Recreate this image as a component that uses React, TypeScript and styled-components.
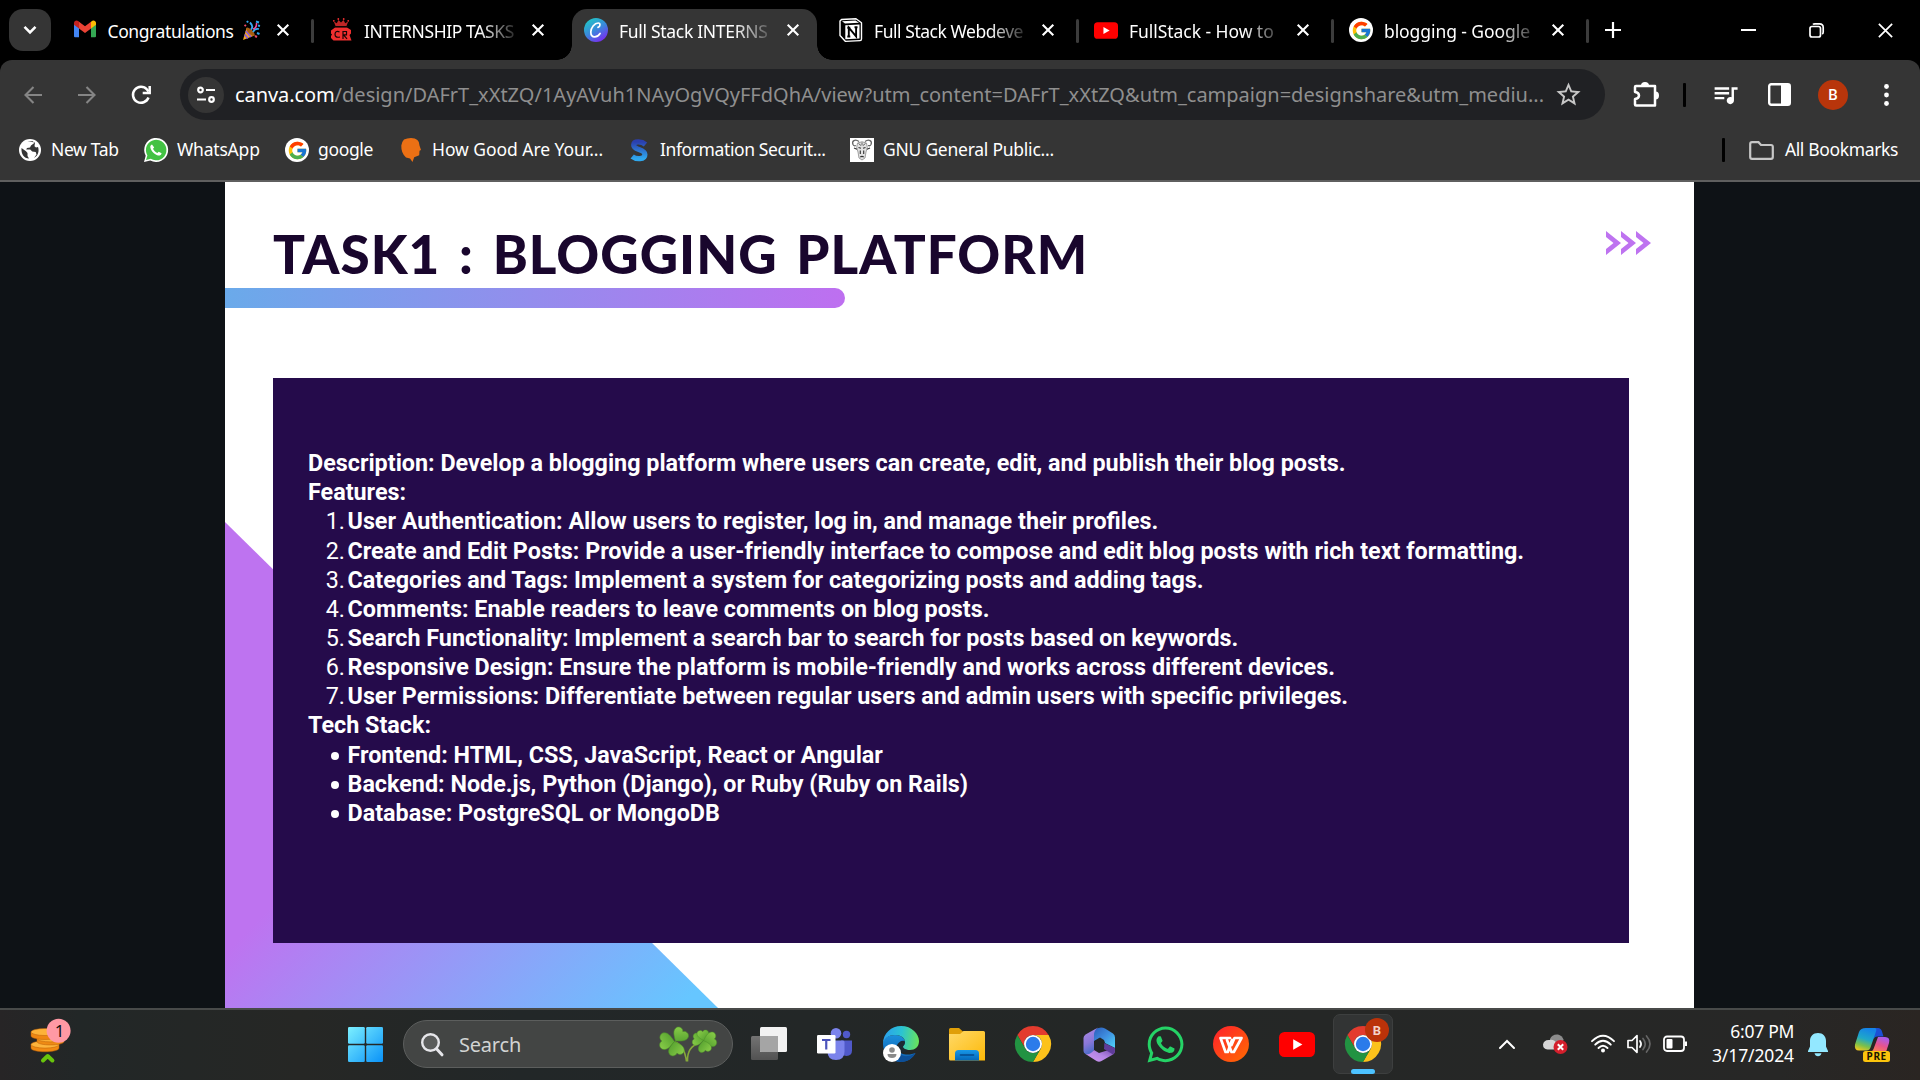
import React from "react";
import styled, { createGlobalStyle, css } from "styled-components";
import { FcGoogle } from "react-icons/fc";
import { FaWhatsapp } from "react-icons/fa";
import { MdQueueMusic, MdStarBorder } from "react-icons/md";

const GlobalStyle = createGlobalStyle`
  * { box-sizing: border-box; }
  html, body { margin: 0; padding: 0; background: #000; overflow: hidden; }
`;

const ui = `"Noto Sans", "Open Sans", sans-serif`;

/* ---------- shell ---------- */

const Desktop = styled.div`
  width: 1920px;
  height: 1080px;
  display: flex;
  flex-direction: column;
  overflow: hidden;
  background: #000;
  font-family: ${ui};
  color: #fff;
`;

const Label = styled.span<{ $size?: number; $track?: number; $color?: string; $top?: number; $bottom?: number }>`
  display: block;
  padding-top: ${(p) => p.$top ?? 0}px;
  padding-bottom: ${(p) => p.$bottom ?? 0}px;
  font-size: ${(p) => p.$size ?? 17.5}px;
  letter-spacing: ${(p) => p.$track ?? 0}px;
  color: ${(p) => p.$color ?? "#fff"};
  white-space: nowrap;
  line-height: 1.3;
`;

const Svg = styled.svg`
  display: block;
  flex: none;
  overflow: visible;
`;

const Slot = styled.div<{ $w: number; $ml?: number }>`
  flex: none;
  width: ${(p) => p.$w}px;
  margin-left: ${(p) => p.$ml ?? 0}px;
  display: flex;
  align-items: center;
  justify-content: center;

  > svg {
    flex: none;
  }
`;

/* ---------- tab strip ---------- */

const TabStrip = styled.div`
  flex: none;
  height: 60px;
  padding: 9px 0 0 9px;
  display: flex;
  background: #000;
`;

const TabSearch = styled.div`
  width: 42px;
  height: 42px;
  margin-right: 11px;
  border-radius: 14px;
  background: #353535;
  display: grid;
  place-items: center;
`;

const TabCell = styled.div`
  width: 255px;
  display: flex;
`;

const TabBody = styled.div<{ $active?: boolean; $inset: number }>`
  position: relative;
  width: 245px;
  height: 51px;
  padding: 0 12px 9px ${(p) => p.$inset}px;
  display: flex;
  align-items: center;
  ${(p) =>
    p.$active &&
    css`
      background: #353535;
      border-radius: 15px 15px 0 0;
      &::before,
      &::after {
        content: "";
        position: absolute;
        bottom: 0;
        width: 15px;
        height: 15px;
      }
      &::before {
        left: -15px;
        background: radial-gradient(circle at 0 0, transparent 14.5px, #353535 15px);
      }
      &::after {
        right: -15px;
        background: radial-gradient(circle at 100% 0, transparent 14.5px, #353535 15px);
      }
    `}
`;

const TabTitle = styled.div<{ $fade: boolean }>`
  width: 152px;
  margin-left: 11px;
  display: flex;
  align-items: center;
  ${(p) =>
    p.$fade &&
    css`
      mask-image: linear-gradient(90deg, #000 115px, rgba(0, 0, 0, 0.15) 151px);
    `}
`;

const TabClose = styled.div`
  width: 24px;
  margin-left: auto;
  display: grid;
  place-items: center;
`;

const TabDivider = styled.div<{ $show: boolean }>`
  width: 3px;
  height: 24px;
  margin: 10px 0 0 4px;
  border-radius: 2px;
  background: ${(p) => (p.$show ? "#3c3c3c" : "transparent")};
`;

const WindowControls = styled.div`
  margin-left: auto;
  height: 42px;
  display: flex;
  align-items: center;
`;

/* ---------- toolbar ---------- */

const Chrome = styled.div`
  flex: none;
  height: 122px;
  background: #353535;
  border-radius: 12px 12px 0 0;
  border-bottom: 2px solid #5f5f5f;
`;

const Toolbar = styled.div`
  height: 69px;
  display: flex;
  align-items: center;
`;

const AddressBar = styled.div`
  width: 1425px;
  height: 51px;
  margin-left: 27px;
  padding: 0 22px 0 8px;
  border-radius: 26px;
  background: #202124;
  display: flex;
  align-items: center;
`;

const SiteInfo = styled.div`
  width: 36px;
  height: 36px;
  border-radius: 50%;
  background: #353535;
  display: grid;
  place-items: center;
  margin-right: 11px;
`;

const Url = styled.div`
  flex: 1;
  display: flex;
  align-items: center;
`;

const Divider = styled.div<{ $ml: number }>`
  width: 3px;
  height: 24px;
  margin-left: ${(p) => p.$ml}px;
  border-radius: 1px;
  background: #000;
`;

const Avatar = styled.div`
  width: 30px;
  height: 30px;
  margin-left: 27px;
  border-radius: 50%;
  background: #b8350b;
  display: grid;
  place-items: center;
  font: 500 15px Roboto, sans-serif;
`;

const Bookmarks = styled.div`
  height: 51px;
  padding: 0 22px 9px 18px;
  display: flex;
  align-items: center;
`;

const Bookmark = styled.div<{ $w: number }>`
  width: ${(p) => p.$w}px;
  display: flex;
  align-items: center;
  gap: 9px;
`;

const AllBookmarks = styled.div`
  margin-left: auto;
  display: flex;
  align-items: center;
`;

/* ---------- slide ---------- */

const Viewport = styled.main`
  flex: none;
  height: 826px;
  background: #0e1216;
  padding: 0 226px 0 225px;
`;

const Slide = styled.section`
  position: relative;
  height: 826px;
  background: #fff;
  overflow: hidden;
`;

const CornerWedge = styled.div`
  position: absolute;
  left: 0;
  bottom: 0;
  width: 493px;
  height: 486px;
  clip-path: polygon(0 0, 100% 100%, 0 100%);
  background: linear-gradient(135deg, #be73f0 0%, #be73f0 44%, #66c6ff 96%);
`;

const SlideHeader = styled.header`
  height: 106px;
  padding: 0 43px 0 48px;
  display: flex;
  justify-content: space-between;
`;

const SlideTitle = styled.h1`
  margin: 0;
  padding-top: 38px;
  font: 900 53px/68px Lato, sans-serif;
  letter-spacing: 1px;
  word-spacing: 5.2px;
  color: #19062d;
  white-space: nowrap;
`;

const Arrows = styled.div`
  padding-top: 49px;
`;

const Underline = styled.div`
  width: 620px;
  height: 20px;
  border-radius: 0 10px 10px 0;
  background: linear-gradient(90deg, #6aaaea, #be6ff0);
`;

const Card = styled.article`
  position: relative;
  width: 1356px;
  height: 565px;
  margin: 70px 0 0 48px;
  padding: 71.2px 0 0 35px;
  background: #250b4b;
  font: 700 23.33px/29.14px Roboto, sans-serif;
  color: #fff;
`;

const Line = styled.div`
  white-space: nowrap;
`;

const Item = styled.div`
  display: grid;
  grid-template-columns: 39.5px 1fr;
  white-space: nowrap;
`;

const Marker = styled.span`
  padding-right: 2.5px;
  text-align: right;
  font-weight: 400;
`;

const Dot = styled.i`
  justify-self: end;
  align-self: center;
  width: 8px;
  height: 8px;
  margin: 1px 8.5px 0 0;
  border-radius: 50%;
  background: #fff;
`;

/* ---------- taskbar ---------- */

const Taskbar = styled.footer`
  flex: none;
  height: 72px;
  padding-bottom: 2px;
  border-top: 2px solid #484a49;
  background: linear-gradient(90deg, #272526 0, #222727 80px, #262725 300px, #222728 520px, #242726 1100px, #272726 1780px, #2a2522 1920px);
  display: flex;
  align-items: center;
`;

const SearchBox = styled.div`
  width: 330px;
  height: 48px;
  margin-left: 20px;
  padding: 0 13px 0 16.5px;
  border: 1.5px solid #5c5e5d;
  border-radius: 24px;
  background: #434544;
  display: flex;
  align-items: center;
`;

const Apps = styled.div`
  margin-left: 6px;
  display: flex;
  gap: 6px;
`;

const AppButton = styled.div<{ $active?: boolean }>`
  position: relative;
  width: 60px;
  height: 60px;
  border-radius: 7px;
  display: grid;
  place-items: center;
  ${(p) =>
    p.$active &&
    css`
      background: #323434;
      border: 1.5px solid #3d3f3f;
      &::after {
        content: "";
        position: absolute;
        left: 16.5px;
        bottom: -1px;
        width: 24px;
        height: 5px;
        border-radius: 3px;
        background: #4cc2ff;
      }
    `}
`;

const ProfileBadge = styled.span`
  position: absolute;
  top: 3px;
  right: 3px;
  width: 24px;
  height: 24px;
  border-radius: 50%;
  background: #bb3209;
  color: #f3d3c9;
  display: grid;
  place-items: center;
  font: 700 13px Roboto, sans-serif;
`;

const Clock = styled.div`
  width: 106px;
  padding-bottom: 2px;
  display: flex;
  flex-direction: column;
  align-items: flex-end;
  gap: 1px;
`;

/* ---------- drawings ---------- */

const Cross = ({ s, w = 2 }: { s: number; w?: number }) => (
  <Svg width={s} height={s} viewBox="0 0 12 12" fill="none" stroke="#fff" strokeWidth={w}>
    <path d="M.7.7l10.6 10.6M11.3.7L.7 11.3" />
  </Svg>
);

const Gmail = () => (
  <Svg width="24" height="24" viewBox="0 0 24 24">
    <path d="M1 5v13.200q0 1 1 1h4V8.500z" fill="#4285f4" />
    <path d="M23 5v13.200q0 1-1 1h-4V8.500z" fill="#34a853" />
    <path d="M18 4v6.500l5-3.700V5c0-2.500-2.700-3.200-4.200-2z" fill="#fbbc04" />
    <path d="M6 10.500V3.800l6 4.500 6-4.500v6.700L12 15z" fill="#ea4335" />
    <path d="M1 5v1.800l5 3.700V3.800L5.200 3C3.500 1.800 1 2.600 1 5z" fill="#c5221f" />
  </Svg>
);

const Popper = () => (
  <Svg width="19" height="21" viewBox="0 0 19 21">
    <path d="M4.500 8L1 20l11.500-4.500z" fill="#f7a823" />
    <path d="M4 11l5 6M2.800 14.500l3 4" stroke="#8b5bd6" strokeWidth="1.800" />
    <ellipse cx="8.500" cy="11.800" rx="5.600" ry="2.200" transform="rotate(45 8.500 11.800)" fill="#a65c12" />
    <path d="M9 9.500q3-3-1-7M11 12q2-4 6-3" stroke="#38a8f5" strokeWidth="1.800" fill="none" />
    <path d="M11 9q4-1 3.500-6" stroke="#f04aa0" strokeWidth="1.500" fill="none" />
    <path d="M14 1.500l3 1M5 1l1 1.500M16 5.500l2 .5M15 13l2.500 1" stroke="#2fa4f0" strokeWidth="2" />
    <path d="M2.500 5l1.500 1M13 16l2 1" stroke="#f04a6a" strokeWidth="2" />
  </Svg>
);

const RobotCrown = () => (
  <Svg width="24" height="24" viewBox="0 0 24 24">
    <g fill="#ef2f2f">
      <path d="M6.500 8L4.800 3.500l3 1.800L9.500 2 12 4.500 14.500 2l1.700 3.300 3-1.800L17.500 8z" opacity=".8" />
      <circle cx="4.800" cy="2.800" r=".9" />
      <circle cx="9.300" cy="1" r=".9" />
      <circle cx="14.700" cy="1" r=".9" />
      <circle cx="19.200" cy="2.800" r=".9" />
      <path d="M6 9.500h12l4 2.500v3.500l-1.500 1.500 2 5.500H4.500L2 20v-2l1-1.500-1-1v-3z" />
    </g>
    <path d="M10.500 13.800Q6 12.500 6 16.300t5 2.700M14 21v-7.500h3.500v3.300h-3l3.500 4" fill="none" stroke="#160606" strokeWidth="1.200" />
    <path d="M5 8.700h14" stroke="#160606" strokeWidth=".8" />
  </Svg>
);

const Canva = () => (
  <Svg width="24" height="24" viewBox="0 0 24 24">
    <defs>
      <linearGradient id="cv" x1="0.150" y1="0.100" x2="0.700" y2="1">
        <stop offset="0" stopColor="#22c3c8" />
        <stop offset=".5" stopColor="#3b86dc" />
        <stop offset="1" stopColor="#7a2bf0" />
      </linearGradient>
    </defs>
    <circle cx="12" cy="12" r="12" fill="url(#cv)" />
    <path d="M14 9.300c2.500-.6 2.600-4.300.2-4.300C10.500 5 6.800 9.800 6.800 14c0 3 1.500 4.900 3.900 4.900 2.300 0 4-1.500 5.400-3.500" fill="none" stroke="#fff" strokeWidth="1.700" strokeLinecap="round" />
  </Svg>
);

const Notion = () => (
  <Svg width="24" height="24" viewBox="0 0 24 24">
    <path d="M2.500 1.500L17 .8l5.500 4V21q0 1.500-1.500 1.600L6.500 23.400 1 17.500V3z" fill="#000" stroke="#fff" strokeWidth="1.400" strokeLinejoin="round" />
    <path d="M3 3.200l13.500-.7 3.500 2.300-14 .8z" fill="#fff" />
    <path d="M6.300 7.300l14.200-.8v14L6.300 21.300z" fill="#fff" />
    <path d="M9.800 18.500V9.700l7.300 8.600V9.200M8.300 9.700h3M15.500 9.200h3M8.300 18.500h3" fill="none" stroke="#000" strokeWidth="1.900" />
  </Svg>
);

const YouTube = ({ w, h }: { w: number; h: number }) => (
  <Svg width={w} height={h} viewBox="0 0 36 25">
    <rect width="36" height="25" rx="5.500" fill="#f00" />
    <path d="M14.200 7.200l9.200 5.300-9.200 5.300z" fill="#fff" />
  </Svg>
);

const GoogleBadge = styled.div`
  width: 24px;
  height: 24px;
  border-radius: 50%;
  background: #fff;
  display: grid;
  place-items: center;
`;

const GoogleIcon = () => (
  <GoogleBadge>
    <FcGoogle size={21} />
  </GoogleBadge>
);

const Globe = () => (
  <Svg width="22" height="22" viewBox="0 0 22 22">
    <circle cx="11" cy="11" r="11" fill="#fff" />
    <path d="M2.500 9l4.500 3.200 1.500 1.800v3l1.500 2.500C5 19.500 2 15 2.500 9zM8.500 2.300l5.500-.1 1 2-3 2.300-1 2-3 .5-.8 1.500h4l2 2 3.500.5.8 2.500-2.500 3.500c4-2 5.500-7 4-11l-2 .5-1.500-1.300L16 3.500" fill="#353535" />
  </Svg>
);

const WhatsAppMark = () => (
  <Svg width="24" height="24" viewBox="0 0 24 24">
    <path d="M0 24l1.700-6.200A12 12 0 1 1 6.300 22.400z" fill="#fff" />
    <path d="M2 22l1.400-4.600A10.300 10.300 0 1 1 6.800 20.800z" fill="#43c244" />
    <path d="M8 6.500c-1.300.3-2 1.700-1.600 3.200.8 3.300 4 6.800 7.600 7.700 1.600.4 3.300-.5 3.600-2.200l-2.900-1.500-1.300 1.400c-2-.8-3.600-2.400-4.400-4.300l1.200-1.400z" fill="#fff" />
  </Svg>
);

const Head = () => (
  <Svg width="20" height="24" viewBox="0 0 20 24">
    <path d="M3 1.500Q6 0 10 0q8.500 0 8.500 7.500L20 12l-1.500.8-.3 4.500-5 2L11.500 24 9 20.500 5 19.500Q0 15 .3 7.500 1 3.500 3 1.500z" fill="#ec7014" />
  </Svg>
);

const SMark = () => (
  <Svg width="18" height="23" viewBox="0 0 18 23">
    <defs>
      <linearGradient id="sm" x1="0" y1="0" x2="0" y2="1">
        <stop offset="0" stopColor="#2b3fae" />
        <stop offset="1" stopColor="#2fa8ee" />
      </linearGradient>
    </defs>
    <path d="M15.500 5.500C12 2.500 4 1.500 3.700 6c-.2 5.500 11.200 3.500 11.200 9.500 0 5.500-9 5-12.700 2" fill="none" stroke="url(#sm)" strokeWidth="5.200" />
  </Svg>
);

const Gnu = () => (
  <Svg width="24" height="24" viewBox="0 0 24 24">
    <rect width="24" height="24" fill="#fff" />
    <path d="M9 3.500C5 .5 1.500 3 3 6.500 4 8.500 6 7.500 6 7.500M15 3.500c4-3 7.500-.5 6 3-1 2-3 1-3 1" fill="none" stroke="#666" strokeWidth="1.300" />
    <path d="M7.500 5q4.500-2.500 9 0l.8 4.500-1.300 4.500-1 6-3 2-3-2-1-6L6.700 9.500z" fill="#e2e2e2" stroke="#8a8a8a" strokeWidth=".8" />
    <path d="M4 10l3 1.200M20 10l-3 1.200M8.500 9.500l2.500.8M15.500 9.500l-2.500.8M10.300 12.500v3.500M13.700 12.500v3.500M10.300 19q1.700-1.200 3.400 0" stroke="#333" strokeWidth="1.100" fill="none" />
    <path d="M8.500 5.500l2.500 2M15.500 5.500l-2.500 2M12 4.500v3" stroke="#555" strokeWidth=".9" />
  </Svg>
);

const ChromeLogo = () => (
  <Svg width="36" height="36" viewBox="0 0 48 48">
    <path d="M3.200 12A24 24 0 0 1 44.800 12H24A12 12 0 0 0 13.600 30z" fill="#e33b2e" />
    <path d="M44.800 12A24 24 0 0 1 24 48L34.400 30A12 12 0 0 0 24 12z" fill="#fcc21b" />
    <path d="M24 48A24 24 0 0 1 3.200 12L13.600 30A12 12 0 0 0 34.400 30z" fill="#229342" />
    <circle cx="24" cy="24" r="12" fill="#fff" />
    <circle cx="24" cy="24" r="9.600" fill="#2b7bea" />
  </Svg>
);

const Coins = () => (
  <Svg width="46" height="55" viewBox="0 0 46 55">
    <g stroke="#b85f08" strokeWidth=".5">
      <path d="M3 27.500v3.500c0 5 28 5 28 0v-3.500z" fill="#f08a12" />
      <ellipse cx="17" cy="27.500" rx="14" ry="3.600" fill="#fdb43c" />
      <path d="M9 21.500v3c0 4.600 27 4.600 27 0v-3z" fill="#ee8a14" />
      <ellipse cx="22.500" cy="21.500" rx="13.500" ry="3.400" fill="#fcae34" />
      <path d="M3 15v4c0 4.600 28 4.600 28 0v-4z" fill="#ee8612" />
      <ellipse cx="17" cy="15" rx="14" ry="3.500" fill="#fdb238" />
    </g>
    <path d="M15 43.500l4.700-4.500 4.700 4.500" fill="none" stroke="#68c40c" strokeWidth="4" strokeLinecap="round" strokeLinejoin="round" />
    <circle cx="30.600" cy="13.800" r="12" fill="#ff99a4" />
    <text x="31.500" y="19.800" textAnchor="middle" fontFamily={ui} fontSize="17" fill="#111">1</text>
  </Svg>
);

const StartLogo = () => (
  <Svg width="35" height="35" viewBox="0 0 35 35">
    <defs>
      <linearGradient id="st" gradientUnits="userSpaceOnUse" x1="0" y1="0" x2="35" y2="35">
        <stop offset="0" stopColor="#7cf0ff" />
        <stop offset="1" stopColor="#0a92f8" />
      </linearGradient>
    </defs>
    <g fill="url(#st)">
      <rect width="16.800" height="16.800" rx="1.200" />
      <rect x="18.200" width="16.800" height="16.800" rx="1.200" />
      <rect y="18.200" width="16.800" height="16.800" rx="1.200" />
      <rect x="18.200" y="18.200" width="16.800" height="16.800" rx="1.200" />
    </g>
  </Svg>
);

const Leaf = ({ t }: { t: string }) => (
  <path transform={t} d="M0 0C-4-3-8.500-6-7-10.500-5.500-13.500-1.500-13.500 0-11 1.500-13.500 5.500-13.500 7-10.500 8.500-6 4-3 0 0z" fill="url(#lf)" stroke="#4c8f28" strokeWidth=".5" />
);

const Shamrocks = () => (
  <Svg width="60" height="36" viewBox="0 0 60 36">
    <defs>
      <linearGradient id="lf" x1="0" y1="0" x2="1" y2="1">
        <stop offset="0" stopColor="#8ccf4a" />
        <stop offset="1" stopColor="#4d9a2b" />
      </linearGradient>
    </defs>
    <path d="M17 16c6 2 10 8 11.500 19.500M42 17c-8 2-13 7-12.500 18.500" fill="none" stroke="#86a93a" strokeWidth="1.600" />
    <Leaf t="translate(16.500 15.500) rotate(-88) scale(1.150)" />
    <Leaf t="translate(17.500 15) rotate(38) scale(1.080)" />
    <Leaf t="translate(16.500 15.500) rotate(168) scale(1.080)" />
    <Leaf t="translate(45.500 14.500) rotate(-80) scale(.85)" />
    <Leaf t="translate(45.500 14.500) rotate(-5) scale(.8)" />
    <Leaf t="translate(45.500 14.500) rotate(82) scale(1)" />
    <Leaf t="translate(45.500 14.500) rotate(170) scale(.9)" />
  </Svg>
);

const TaskView = () => (
  <Svg width="36" height="36" viewBox="0 0 36 36">
    <defs>
      <linearGradient id="tv" x1="0" y1="0" x2="0" y2="1">
        <stop offset="0" stopColor="#737373" />
        <stop offset="1" stopColor="#525252" />
      </linearGradient>
    </defs>
    <rect y="10" width="27" height="24" rx="1.500" fill="url(#tv)" />
    <rect x="9" y="1" width="27" height="25" rx="1.500" fill="#f2f2f2" />
    <path d="M9 10h18v16H10.500Q9 26 9 24.500z" fill="#a5a5a5" />
  </Svg>
);

const Teams = () => (
  <Svg width="36" height="36" viewBox="0 0 36 36">
    <circle cx="29.500" cy="8.500" r="3.700" fill="#5059c9" />
    <path d="M24 14.500h11v10q0 5-5.500 5.500l-5-1z" fill="#5059c9" />
    <circle cx="19" cy="7.300" r="5.300" fill="#7b83eb" />
    <path d="M10.500 14.500H26q1.500 0 1.500 1.500v9.500q0 8.500-8.500 8.500t-8.500-8.500z" fill="#7b83eb" />
    <rect x="0" y="9" width="18.500" height="18.500" rx="1.200" fill="#fff" />
    <path d="M5 14h8.500M9.250 14v9.500" stroke="#4b53bc" strokeWidth="2.200" />
  </Svg>
);

const Edge = () => (
  <Svg width="36" height="36" viewBox="0 0 36 36">
    <defs>
      <linearGradient id="eg" x1="0" y1="0.400" x2="1" y2="0.500">
        <stop offset="0" stopColor="#2a9fee" />
        <stop offset=".5" stopColor="#2bc3d2" />
        <stop offset="1" stopColor="#68e45c" />
      </linearGradient>
      <linearGradient id="eb" x1="0" y1="0" x2="0" y2="1">
        <stop offset="0" stopColor="#1b8fdc" />
        <stop offset="1" stopColor="#0d5bab" />
      </linearGradient>
    </defs>
    <path d="M0 18C0 12 6 9 12 9c7 0 10 4 10 7 0 1.500-1 2-2 3-5 1-6 9 3 9.500 4 .5 7-1 9.500-1.500C30 32 24.500 36 18 36 8 36 0 28 0 18z" fill="url(#eb)" />
    <path d="M14 20c0 7 5 11 11 10 3 0 5-1.500 7.500-3C30 32 24 36 18 36c-5-3-8-10-4-16z" fill="#0d4f98" />
    <path d="M0 18C0 7 8.500 0 18 0c11 0 18 8 18 15 0 6-4 9-9 9-4 0-7-1.500-7-3s2-2 2-5c0-4-4-7-10-7S1 12 0 18z" fill="url(#eg)" />
    <path d="M13.500 22q0-4.500 4.500-7 4-1 4 1c0 3-2 3.500-2 5s2 2.600 4.500 3q-1.500 3-5.500 2.500-4-.5-5.500-4.500z" fill="#1d2a33" />
    <circle cx="9" cy="27" r="9" fill="#fff" />
    <circle cx="9" cy="24" r="2.800" fill="#8a8a8a" />
    <path d="M4.500 28h9q0 4-4.500 4t-4.500-4z" fill="#8a8a8a" />
  </Svg>
);

const Folder = () => (
  <Svg width="36" height="36" viewBox="0 0 36 36">
    <defs>
      <linearGradient id="fo" x1="0" y1="0" x2="1" y2="1">
        <stop offset="0" stopColor="#ffd968" />
        <stop offset="1" stopColor="#fdb908" />
      </linearGradient>
      <linearGradient id="fb" x1="0" y1="0" x2="0" y2="1">
        <stop offset="0" stopColor="#1898e8" />
        <stop offset="1" stopColor="#0467b8" />
      </linearGradient>
    </defs>
    <path d="M0 3.500Q0 2 1.500 2H10l4.500 4H30v6H0z" fill="#e09f08" />
    <path d="M0 8h11l3.500-3H34.500Q36 5 36 6.500V34.500H1.500Q0 34.500 0 33z" fill="url(#fo)" />
    <path d="M6 34.500V27.500Q6 24 9.500 24h17Q30 24 30 27.500v7z" fill="url(#fb)" />
    <path d="M11.500 29h13" stroke="#04498c" strokeWidth="1.600" strokeLinecap="round" />
  </Svg>
);

const Office = () => (
  <Svg width="32" height="35" viewBox="0 0 32 35">
    <defs>
      <linearGradient id="o1" x1="0" y1="0" x2="0.300" y2="1">
        <stop offset="0" stopColor="#b08ae6" />
        <stop offset=".6" stopColor="#8a78d8" />
        <stop offset="1" stopColor="#4a6cc8" />
      </linearGradient>
      <linearGradient id="o2" x1="0" y1="0" x2="1" y2="1">
        <stop offset="0" stopColor="#2a5ab8" />
        <stop offset=".5" stopColor="#3f8fe0" />
        <stop offset="1" stopColor="#4fd6fb" />
      </linearGradient>
      <linearGradient id="o3" x1="0" y1="1" x2="1" y2="0">
        <stop offset="0" stopColor="#cf98f2" />
        <stop offset=".5" stopColor="#b485e4" />
        <stop offset="1" stopColor="#6a44a4" />
      </linearGradient>
    </defs>
    <path d="M10.500 3.500Q17-1.500 22 1.500l8 5q2 1.500 2 4V21L22 16l-1-3-4-2.500-6 3.500z" fill="url(#o2)" />
    <path d="M15 .5L2.500 7.500Q.5 9 .5 11v13q0 2 2 3l2 .8q5-.8 6.500-5V8q0-5 4-7.500z" fill="url(#o1)" />
    <path d="M2.500 27q5 1 8.500-4l5 3 16-5v3q0 2-2 3.500L18.500 34q-2.500 1.500-5 0z" fill="url(#o3)" />
    <path d="M21 16l11 5q0 5-2 6.500l-9-5.500z" fill="#5f3c9a" />
    <path d="M16 11.500l5.200 3v6L16 23.500l-5-3v-6z" fill="#242726" />
  </Svg>
);

const Wps = () => (
  <Svg width="36" height="36" viewBox="0 0 36 36">
    <defs>
      <linearGradient id="wp" x1="0" y1="0" x2="1" y2="1">
        <stop offset="0" stopColor="#ff1f2d" />
        <stop offset="1" stopColor="#ff6c00" />
      </linearGradient>
    </defs>
    <circle cx="18" cy="18" r="18" fill="url(#wp)" />
    <path d="M17 12H7.500l5 14h2.300l4.200-12M14 14l4.500 12h2.300l7.700-14h-7l-3 7" fill="none" stroke="#fff" strokeWidth="2.700" strokeLinejoin="round" strokeLinecap="round" />
  </Svg>
);

const Wifi = () => (
  <Svg width="26" height="20" viewBox="0 0 26 20" fill="none" stroke="#fff" strokeWidth="1.900" strokeLinecap="round">
    <path d="M2 7.200q11-11 22 0M5.200 10.700q7.800-7.800 15.600 0M8.500 14q4.500-4.500 9 0" />
    <circle cx="13" cy="16.600" r="2" fill="#fff" stroke="none" />
  </Svg>
);

const Volume = () => (
  <Svg width="26" height="22" viewBox="0 0 26 22" fill="none" stroke="#fff" strokeWidth="1.700" strokeLinecap="round" strokeLinejoin="round">
    <path d="M2 7.500h4l5-4.800v16.600l-5-4.800H2z" />
    <path d="M14 8q2.200 3 0 6" />
    <path d="M17 5.500q4.500 5.500 0 11M20.500 3q7 8 0 16" stroke="#666" />
  </Svg>
);

const Battery = () => (
  <Svg width="26" height="18" viewBox="0 0 26 18">
    <rect x="2" y="1.500" width="20" height="14.500" rx="3" fill="none" stroke="#fff" strokeWidth="1.800" />
    <rect x="4.500" y="4" width="6" height="9.500" rx="1" fill="#fff" />
    <path d="M23 6.500h2v4.500h-2z" fill="#fff" />
  </Svg>
);

const Cloud = () => (
  <Svg width="26" height="22" viewBox="0 0 26 22">
    <path d="M8 6q2-5 8-4.500 4 1 5.500 5L20 12 8 9z" fill="#8c8c8c" />
    <path d="M5.500 16.500Q1 16 1 11.500 2 6.500 7.500 7q5-1 7.500 4v5.500z" fill="#d6d6d6" />
    <circle cx="18.500" cy="14" r="7" fill="#d41f2c" />
    <path d="M15.800 11.300l5.400 5.400m0-5.400l-5.400 5.400" stroke="#fff" strokeWidth="2" />
  </Svg>
);

const Bell = () => (
  <Svg width="22" height="25" viewBox="0 0 22 25">
    <path d="M11 1C6 1 3 4.500 3 9v5.500L1 19v1h20v-1l-2-4.500V9c0-4.500-3-8-8-8z" fill="#93e8ff" />
    <path d="M7.500 21.300h7q-.8 3-3.500 3t-3.500-3z" fill="#93e8ff" />
  </Svg>
);

const Copilot = () => (
  <Svg width="38" height="36" viewBox="0 0 38 36">
    <defs>
      <linearGradient id="c1" x1="0.500" y1="0" x2="0.200" y2="1">
        <stop offset="0" stopColor="#1583e8" />
        <stop offset=".45" stopColor="#1fa8c8" />
        <stop offset=".75" stopColor="#7cc04a" />
        <stop offset="1" stopColor="#f2c81e" />
      </linearGradient>
      <linearGradient id="c2" x1="0.700" y1="0" x2="0.200" y2="1">
        <stop offset="0" stopColor="#a85cf0" />
        <stop offset=".5" stopColor="#e8548c" />
        <stop offset="1" stopColor="#fb8a4a" />
      </linearGradient>
    </defs>
    <path d="M18 2h6q3 0 4 3.500l1.500 5h-6q-3 0-4 3z" fill="#1c4fd6" />
    <path d="M12 2h9q2 .5 1 3.500l-5.500 16q-1 3-4 3H5q-5 0-4-6L5 6q1.500-4 7-4z" fill="url(#c1)" />
    <path d="M24 11h7q5.500 0 4 6l-3 9H14.500q4 0 5-3z" fill="url(#c2)" />
    <rect x="9" y="25" width="27" height="11" rx="2.500" fill="#fcc50d" />
    <text x="22.700" y="34" textAnchor="middle" fontFamily={ui} fontWeight="700" fontSize="10" letterSpacing=".6" fill="#1b1500">PRE</text>
  </Svg>
);

/* ---------- content ---------- */

type Tab = {
  title: string;
  track: number;
  icon: React.ReactNode;
  inset?: number;
  active?: boolean;
  divider?: boolean;
  extra?: React.ReactNode;
};

const tabs: Tab[] = [
  { title: "Congratulations", track: -0.4, icon: <Gmail />, inset: 10.5, divider: true, extra: <Popper /> },
  { title: "INTERNSHIP TASKS", track: -0.4, icon: <RobotCrown /> },
  { title: "Full Stack INTERNS", track: -0.3, icon: <Canva />, active: true },
  { title: "Full Stack Webdeve", track: -0.45, icon: <Notion />, divider: true },
  { title: "FullStack - How to", track: -0.05, icon: <YouTube w={24} h={17} />, divider: true },
  { title: "blogging - Google", track: -0.08, icon: <GoogleIcon />, divider: true },
];

const bookmarks = [
  { w: 126, name: "New Tab", icon: <Globe />, track: -0.35 },
  { w: 141, name: "WhatsApp", icon: <WhatsAppMark />, track: -0.2 },
  { w: 114, name: "google", icon: <GoogleIcon />, track: -0.35 },
  { w: 228, name: "How Good Are Your...", icon: <Head />, track: -0.05 },
  { w: 223, name: "Information Securit...", icon: <SMark />, track: -0.4 },
  { w: 210, name: "GNU General Public...", icon: <Gnu />, track: -0.25 },
];

const features = [
  "User Authentication: Allow users to register, log in, and manage their profiles.",
  "Create and Edit Posts: Provide a user-friendly interface to compose and edit blog posts with rich text formatting.",
  "Categories and Tags: Implement a system for categorizing posts and adding tags.",
  "Comments: Enable readers to leave comments on blog posts.",
  "Search Functionality: Implement a search bar to search for posts based on keywords.",
  "Responsive Design: Ensure the platform is mobile-friendly and works across different devices.",
  "User Permissions: Differentiate between regular users and admin users with specific privileges.",
];

const stack = [
  "Frontend: HTML, CSS, JavaScript, React or Angular",
  "Backend: Node.js, Python (Django), or Ruby (Ruby on Rails)",
  "Database: PostgreSQL or MongoDB",
];

const apps: { icon: React.ReactNode; active?: boolean }[] = [
  { icon: <TaskView /> },
  { icon: <Teams /> },
  { icon: <Edge /> },
  { icon: <Folder /> },
  { icon: <ChromeLogo /> },
  { icon: <Office /> },
  { icon: <FaWhatsapp size={41} color="#25d366" /> },
  { icon: <Wps /> },
  { icon: <YouTube w={36} h={25} /> },
  { icon: <ChromeLogo />, active: true },
];

const Tabs = () => (
  <TabStrip>
    <TabSearch>
      <Svg width="14" height="10" viewBox="0 0 14 10" fill="none" stroke="#fff" strokeWidth="2.600">
        <path d="M1.500 1.800L7 7.300l5.500-5.500" />
      </Svg>
    </TabSearch>
    {tabs.map((t) => (
      <TabCell key={t.title}>
        <TabBody $active={t.active} $inset={t.inset ?? 12}>
          <Slot $w={24}>{t.icon}</Slot>
          <TabTitle $fade={!t.extra}>
            <Label $track={t.track} $top={2}>{t.title}</Label>
            {t.extra && <Slot $w={19} $ml={8}>{t.extra}</Slot>}
          </TabTitle>
          <TabClose>
            <Cross s={12} w={2.1} />
          </TabClose>
        </TabBody>
        <TabDivider $show={!!t.divider} />
      </TabCell>
    ))}
    <WindowControls>
      <Slot $w={24}>
        <Svg width="16" height="16" viewBox="0 0 16 16" stroke="#fff" strokeWidth="2.200">
          <path d="M8 0v16M0 8h16" />
        </Svg>
      </Slot>
      <Slot $w={68} $ml={89}>
        <Svg width="15" height="2" viewBox="0 0 15 2">
          <path d="M0 0h15v2H0z" fill="#fff" />
        </Svg>
      </Slot>
      <Slot $w={69}>
        <Svg width="15" height="15" viewBox="0 0 15 15" fill="none" stroke="#fff" strokeWidth="1.700">
          <rect x="1" y="3.500" width="10.500" height="10.500" rx="2" />
          <path d="M4 1.500Q4.500.8 6 .8h4.500q3.700 0 3.700 3.700V9q0 1.500-1 2" />
        </Svg>
      </Slot>
      <Slot $w={69}>
        <Cross s={15} w={1.4} />
      </Slot>
    </WindowControls>
  </TabStrip>
);

const Navigation = () => (
  <Toolbar>
    <Slot $w={24} $ml={21}>
      <Svg width="18" height="18" viewBox="0 0 18 18" fill="none" stroke="#858585" strokeWidth="2.100">
        <path d="M18 9H2M9.500 1L1.500 9l8 8" />
      </Svg>
    </Slot>
    <Slot $w={24} $ml={30}>
      <Svg width="18" height="18" viewBox="0 0 18 18" fill="none" stroke="#858585" strokeWidth="2.100">
        <path d="M0 9h16M8.500 1l8 8-8 8" />
      </Svg>
    </Slot>
    <Slot $w={24} $ml={30}>
      <Svg width="20" height="20" viewBox="0 0 20 20" fill="none" stroke="#fff" strokeWidth="2.500">
        <path d="M17.500 12.500A8 8 0 1 1 16 4.500l1.500 2" />
        <path d="M18.700 1v7h-7" />
      </Svg>
    </Slot>
    <AddressBar>
      <SiteInfo>
        <Svg width="18" height="18" viewBox="0 0 18 18" fill="none" stroke="#fff" strokeWidth="2.200">
          <circle cx="3.500" cy="4" r="2.300" />
          <path d="M9 4h9M0 13.500h9" />
          <circle cx="14.500" cy="13.500" r="2.300" />
        </Svg>
      </SiteInfo>
      <Url>
        <Label $size={20} $track={-0.08}>canva.com</Label>
        <Label $size={20} $track={0} $color="#8f8f8f">
          /design/DAFrT_xXtZQ/1AyAVuh1NAyOgVQyFFdQhA/view?utm_content=DAFrT_xXtZQ&amp;utm_campaign=designshare&amp;utm_mediu...
        </Label>
      </Url>
      <MdStarBorder size={29} color="#c7c7c7" />
    </AddressBar>
    <Slot $w={26} $ml={28}>
      <Svg width="26" height="26" viewBox="0 0 26 26">
        <path d="M3 4h19v19.500H3q-1 0-1-1V17q4-.5 4-3.500t-4-3.500V5q0-1 1-1z" fill="none" stroke="#fff" strokeWidth="2.500" strokeLinejoin="round" />
        <path d="M8 3.500a4 3.500 0 0 1 8 0zM22.500 9.500a3.500 4 0 0 1 0 8z" fill="#fff" />
      </Svg>
    </Slot>
    <Divider $ml={24} />
    <Slot $w={25} $ml={27}>
      <MdQueueMusic size={29} color="#fff" />
    </Slot>
    <Slot $w={23} $ml={30}>
      <Svg width="23" height="23" viewBox="0 0 23 23">
        <rect x="1.200" y="1.200" width="20.600" height="20.600" rx="2" fill="none" stroke="#fff" strokeWidth="2.400" />
        <path d="M13 1h8.500v21H13z" fill="#fff" />
      </Svg>
    </Slot>
    <Avatar>B</Avatar>
    <Slot $w={24} $ml={26.5}>
      <Svg width="5" height="22" viewBox="0 0 5 22" fill="#fff">
        <circle cx="2.500" cy="2.500" r="2.400" />
        <circle cx="2.500" cy="11" r="2.400" />
        <circle cx="2.500" cy="19.500" r="2.400" />
      </Svg>
    </Slot>
  </Toolbar>
);

const BookmarkBar = () => (
  <Bookmarks>
    {bookmarks.map((b) => (
      <Bookmark key={b.name} $w={b.w}>
        <Slot $w={24}>{b.icon}</Slot>
        <Label $track={b.track} $bottom={2}>{b.name}</Label>
      </Bookmark>
    ))}
    <AllBookmarks>
      <Divider $ml={0} />
      <Slot $w={26} $ml={23}>
        <Svg width="25" height="19" viewBox="0 0 25 19">
          <path d="M1.200 3q0-1.800 1.800-1.800h6.500L12 4h10q1.800 0 1.800 1.800v10.200q0 1.800-1.800 1.800H3q-1.800 0-1.800-1.800z" fill="none" stroke="#c7c7c7" strokeWidth="2.200" />
        </Svg>
      </Slot>
      <Slot $w={113} $ml={11}>
        <Label $track={-0.35} $bottom={2}>All Bookmarks</Label>
      </Slot>
    </AllBookmarks>
  </Bookmarks>
);

const Presentation = () => (
  <Viewport>
    <Slide>
      <CornerWedge />
      <SlideHeader>
        <SlideTitle>TASK1 : BLOGGING PLATFORM</SlideTitle>
        <Arrows>
          <Svg width="45" height="24" viewBox="0 0 45 24" fill="#be73f0">
            {[0, 15, 30].map((x) => (
              <path key={x} transform={`translate(${x} 0)`} d="M0 0l15 12L0 24v-6l7.500-6L0 6z" />
            ))}
          </Svg>
        </Arrows>
      </SlideHeader>
      <Underline />
      <Card>
        <Line>Description: Develop a blogging platform where users can create, edit, and publish their blog posts.</Line>
        <Line>Features:</Line>
        {features.map((f, i) => (
          <Item key={f}>
            <Marker>{i + 1}.</Marker>
            <span>{f}</span>
          </Item>
        ))}
        <Line>Tech Stack:</Line>
        {stack.map((s) => (
          <Item key={s}>
            <Dot />
            <span>{s}</span>
          </Item>
        ))}
      </Card>
    </Slide>
  </Viewport>
);

const SystemBar = () => (
  <Taskbar>
    <Slot $w={46} $ml={28}>
      <Coins />
    </Slot>
    <Slot $w={35} $ml={274}>
      <StartLogo />
    </Slot>
    <SearchBox>
      <Svg width="22" height="23" viewBox="0 0 22 23" fill="none" stroke="#e6e6ea" strokeWidth="2.400">
        <circle cx="9.500" cy="9.500" r="8.300" fill="#5a5c5b" />
        <path d="M15.500 15.800l5.500 6" strokeWidth="3" strokeLinecap="round" />
      </Svg>
      <Slot $w={62} $ml={16.5}>
        <Label $size={20} $color="#d2d4d3" $track={-0.2} $top={2}>Search</Label>
      </Slot>
      <Slot $w={60} $ml={136.5}>
        <Shamrocks />
      </Slot>
    </SearchBox>
    <Apps>
      {apps.map((a, i) => (
        <AppButton key={i} $active={a.active}>
          {a.icon}
          {a.active && <ProfileBadge>B</ProfileBadge>}
        </AppButton>
      ))}
    </Apps>
    <Slot $w={24} $ml={102}>
      <Svg width="16" height="9" viewBox="0 0 16 9" fill="none" stroke="#fff" strokeWidth="2" strokeLinecap="round">
        <path d="M1 8l7-7 7 7" />
      </Svg>
    </Slot>
    <Slot $w={26} $ml={23}>
      <Cloud />
    </Slot>
    <Slot $w={26} $ml={22}>
      <Wifi />
    </Slot>
    <Slot $w={26} $ml={10}>
      <Volume />
    </Slot>
    <Slot $w={26} $ml={10}>
      <Battery />
    </Slot>
    <Clock>
      <Label $track={-0.3}>6:07 PM</Label>
      <Label $track={-0.12}>3/17/2024</Label>
    </Clock>
    <Slot $w={22} $ml={13}>
      <Bell />
    </Slot>
    <Slot $w={38} $ml={25}>
      <Copilot />
    </Slot>
  </Taskbar>
);

export default function App() {
  return (
    <Desktop>
      <GlobalStyle />
      <Tabs />
      <Chrome>
        <Navigation />
        <BookmarkBar />
      </Chrome>
      <Presentation />
      <SystemBar />
    </Desktop>
  );
}
